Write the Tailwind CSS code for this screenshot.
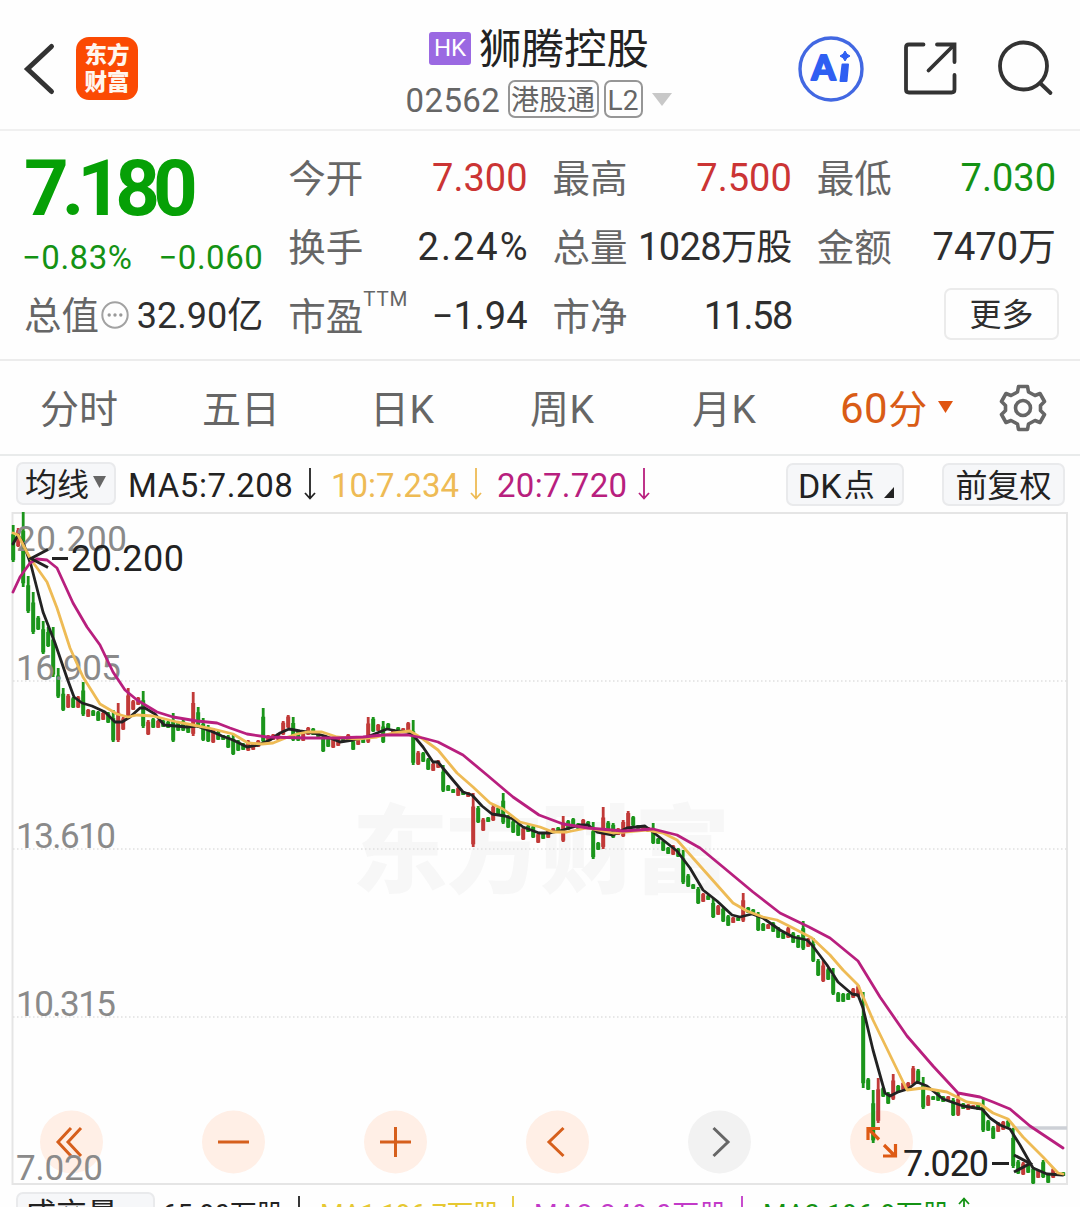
<!DOCTYPE html>
<html lang="zh-CN">
<head>
<meta charset="utf-8">
<title>狮腾控股 02562</title>
<script src="https://cdn.jsdelivr.net/npm/@tailwindcss/browser@4"></script>
</head>
<body class="bg-white">
<div class="w-[1080px] h-[1207px] overflow-hidden flex flex-col bg-[#fefefe] font-[Roboto,'Noto_Sans_CJK_SC',sans-serif] text-[#2e2e2e] whitespace-nowrap">

  <!-- Title bar -->
  <header class="h-[131px] shrink-0 border-b-2 border-[#f0f0f0] flex items-start">
    <svg class="w-[52px] h-[60px] ml-2 mt-[39px] shrink-0" viewBox="8 39 52 60" fill="none" stroke="#333" stroke-width="5" stroke-linecap="round"><path d="M51.500 46.500L27.500 69L51.500 91.500" stroke-linejoin="miter"/></svg>
    <div class="w-[62px] h-[63px] ml-4 mt-[37px] shrink-0 rounded-[13px] bg-[#fb4a03] text-[#fff6ee] font-black text-[22.500px] leading-[27px] flex flex-col items-center justify-center"><span>东方</span><span>财富</span></div>
    <div class="w-[400px] ml-[202px] mt-[18px] shrink-0 flex flex-col items-center">
      <div class="h-[60px] flex items-center -ml-[2px]">
        <span class="w-[42px] h-[33px] mr-2 rounded-[3px] bg-[#9b69e2] text-white text-[24px] leading-[33px] text-center">HK</span>
        <span class="text-[42.500px] leading-[60px] pt-[3px] text-[#222]">狮腾控股</span>
      </div>
      <div class="h-[42px] flex items-center text-[#666] -ml-[3px]">
        <span class="text-[33px] leading-[42px] pt-[3px] tracking-[0.400px] w-[102px]">02562</span>
        <span class="w-[91px] h-[38px] border-2 border-[#969696] rounded-[7px] text-[28px] leading-[38px] text-center">港股通</span>
        <span class="w-[39px] h-[38px] ml-[5px] border-2 border-[#969696] rounded-[7px] text-[28px] leading-[38px] text-center">L2</span>
        <svg class="w-5 h-[13px] ml-[9px]" viewBox="0 0 20 13"><path d="M0 0H20L10 13Z" fill="#c8c8c8"/></svg>
      </div>
    </div>
    <svg class="w-[280px] h-[80px] ml-[52px] mt-[29px] shrink-0" viewBox="792 29 280 80" fill="none" stroke="#333" stroke-width="3.800">
      <circle cx="831" cy="69" r="31" stroke="#4268e2" stroke-width="3.400"/>
      <g fill="#2f5ff2" stroke="#2f5ff2" stroke-linejoin="round">
        <text x="811.500" y="80" font-family="Lato" font-weight="900" font-size="35" textLength="24" lengthAdjust="spacingAndGlyphs" stroke-width="2">A</text>
        <path d="M842.500 64.500H848L846.500 81H840.500Z" stroke-width="2"/>
        <path d="M845 51Q846.300 54.700 850 56Q846.300 57.300 845 61Q843.700 57.300 840 56Q843.700 54.700 845 51Z" stroke-width="1"/>
      </g>
      <path d="M923.500 44.500H909Q906 44.500 906 47.500V89.500Q906 92.500 909 92.500H951.500Q954.500 92.500 954.500 89.500V75M937 44.500H954.500V62M928.500 70.500L954 45" stroke-linecap="round"/>
      <circle cx="1023.500" cy="66" r="23.500"/><path d="M1040 83L1050.500 93" stroke-linecap="round"/>
    </svg>
  </header>

  <!-- Quote figures -->
  <section class="h-[230px] shrink-0 border-b-2 border-[#ececec] px-6 pt-[13px] grid grid-cols-4 gap-x-[25px] text-[38px] leading-[69px]">
    <div>
      <div class="h-[90px] text-[78px] leading-[90px] font-bold tracking-[-7px] text-[#06a006]">7.180</div>
      <div class="h-[48px] flex justify-between text-[33px] leading-[48px] text-[#149214]"><span class="tracking-[0.500px] -ml-0.5">−0.83%</span><span class="tracking-[0.500px]">−0.060</span></div>
      <div class="h-[69px] flex items-center justify-between">
        <span class="flex items-center text-[#666] text-[37.500px]">总值<svg class="w-[28px] h-[28px] ml-0.5 -mt-1" viewBox="0 0 28 28" fill="#999"><circle cx="14" cy="14" r="12.700" fill="none" stroke="#a2a2a2" stroke-width="2"/><circle cx="8.200" cy="14" r="1.700"/><circle cx="14" cy="14" r="1.700"/><circle cx="19.800" cy="14" r="1.700"/></svg></span>
        <span class="text-[36px]">32.90亿</span>
      </div>
    </div>
    <div>
      <div class="h-[69px] flex justify-between"><span class="text-[#666] text-[37.500px] pt-px">今开</span><span class="text-[#cb3434]">7.300</span></div>
      <div class="h-[69px] flex justify-between"><span class="text-[#666] text-[37.500px] pt-px">换手</span><span class="tracking-[2px] -mr-[2px]">2.24%</span></div>
      <div class="h-[69px] flex justify-between"><span class="text-[#666] text-[37.500px] flex pt-px">市盈<span class="text-[20.500px] leading-[32px] tracking-[0.800px]">TTM</span></span><span>−1.94</span></div>
    </div>
    <div>
      <div class="h-[69px] flex justify-between"><span class="text-[#666] text-[37.500px] pt-px">最高</span><span class="text-[#cb3434]">7.500</span></div>
      <div class="h-[69px] flex justify-between"><span class="text-[#666] text-[37.500px] pt-px">总量</span><span class="text-[38px] tracking-[-0.600px]">1028<span class="text-[36px]">万股</span></span></div>
      <div class="h-[69px] flex justify-between"><span class="text-[#666] text-[37.500px] pt-px">市净</span><span class="tracking-[-1.500px]">11.58</span></div>
    </div>
    <div>
      <div class="h-[69px] flex justify-between"><span class="text-[#666] text-[37.500px] pt-px">最低</span><span class="text-[#149214]">7.030</span></div>
      <div class="h-[69px] flex justify-between"><span class="text-[#666] text-[37.500px] pt-px">金额</span><span>7470万</span></div>
      <div class="h-[69px] flex items-center justify-end"><span class="w-[115px] h-[52px] -mr-[3px] -mt-1.5 border-2 border-[#ebebeb] rounded-[7px] text-[32px] leading-[51px] text-center">更多</span></div>
    </div>
  </section>

  <!-- Period tabs -->
  <nav class="h-[95px] shrink-0 border-b-2 border-[#e9ebeb] flex items-center text-[39px] leading-[94px] text-[#666]">
    <span class="w-[162px] ml-10 pt-1">分时</span>
    <span class="w-[168px] pt-1">五日</span>
    <span class="w-[160px] pt-1 tracking-[0.500px]">日K</span>
    <span class="w-[162px] pt-1 tracking-[0.500px]">周K</span>
    <span class="w-[148px] pt-1 tracking-[0.500px]">月K</span>
    <span class="w-[98px] pt-1 text-[#d95c16]"><span class="text-[42px] tracking-[0.500px]">60</span>分</span>
    <svg class="w-[15px] h-3 -mt-0.5" viewBox="0 0 15 12"><path d="M0 0H15L7.500 12Z" fill="#e05410"/></svg>
    <svg class="w-[48px] h-[50px] ml-[46px]" viewBox="-24 -25 48 50" fill="none" stroke="#666" stroke-width="3.600" stroke-linejoin="round"><path d="M-4.500-21.500H4.500L5.500-16L12-12.500L17-14.500L21.500-6.500L17.500-2.500V2.500L21.500 6.500L17 14.500L12 12.500L5.500 16L4.500 21.500H-4.500L-5.500 16L-12 12.500L-17 14.500L-21.500 6.500L-17.500 2.500V-2.500L-21.500-6.500L-17-14.500L-12-12.500L-5.500-16Z"/><circle r="7.500"/></svg>
  </nav>

  <!-- Moving average readout -->
  <div class="h-[51px] shrink-0 flex items-center text-[33px] leading-[50px]">
    <span class="w-[100px] h-[43px] ml-4 mt-1 border-2 border-[#e9eaec] rounded-[7px] bg-[#f6f7f9] text-[32px] leading-[40px] pt-[3px] pl-[7px] flex items-center text-[#222]">均线<svg class="w-[13px] h-3 ml-1 -mt-1.5" viewBox="0 0 13 12"><path d="M0 0H13L6.500 12Z" fill="#666"/></svg></span>
    <span class="w-[176px] ml-3 mt-2 tracking-[0.600px] text-[#222]">MA5:7.208</span>
    <svg class="w-3 h-8 mt-1" viewBox="0 0 12 32" fill="none" stroke="#222" stroke-width="1.800"><path d="M6 0V30M1 25L6 30.500L11 25"/></svg>
    <span class="w-[138px] ml-[15px] mt-2 text-[#eebb55]">10:7.234</span>
    <svg class="w-3 h-8 mt-1 ml-px" viewBox="0 0 12 32" fill="none" stroke="#eebb55" stroke-width="1.800"><path d="M6 0V30M1 25L6 30.500L11 25"/></svg>
    <span class="w-[141px] ml-[15px] mt-2 tracking-[0.300px] text-[#b81f7e]">20:7.720</span>
    <svg class="w-3 h-8 mt-1" viewBox="0 0 12 32" fill="none" stroke="#b81f7e" stroke-width="1.800"><path d="M6 0V30M1 25L6 30.500L11 25"/></svg>
    <span class="w-[118px] h-[43px] ml-[136px] mt-1.5 border-2 border-[#e9eaec] rounded-[7px] bg-[#f6f7f9] text-[34px] leading-[40px] pt-[2px] pl-[10px] flex items-center text-[#222]">DK<span class="text-[31px] ml-0.5">点</span><svg class="w-[10px] h-[11px] ml-[9px] mt-[14px]" viewBox="0 0 10 11"><path d="M10 0V11H0Z" fill="#222"/></svg></span>
    <span class="w-[123px] h-[43px] ml-[38px] mt-1.5 border-2 border-[#e9eaec] rounded-[7px] bg-[#f6f7f9] text-[32px] leading-[42px] text-center text-[#222]">前复权</span>
  </div>

  <!-- 60-minute candlestick chart -->
  <svg class="w-[1080px] h-[680px] shrink-0 block" viewBox="0 507 1080 680" font-family="Roboto, sans-serif">
    <text x="352" y="885" font-family="Noto Sans CJK SC, sans-serif" font-weight="900" font-size="96" fill="#f7f7f7" textLength="378">东方财富</text>
    <g fill="none" stroke="#e5e5e5" stroke-width="2">
      <path d="M12.500 513H1067V1184H12.500Z"/>
      <path d="M13 681H1067M13 849H1067M13 1017H1067" stroke="#e0e0e0" stroke-width="1.500" stroke-dasharray="1.500 2.500"/>
    </g>
    <g fill="#ffefe6">
      <circle cx="71.500" cy="1142" r="31.500"/><circle cx="233.500" cy="1142" r="31.500"/><circle cx="395.500" cy="1142" r="31.500"/><circle cx="557.500" cy="1142" r="31.500"/><circle cx="719.500" cy="1142" r="31.500" fill="#f2f2f2"/><circle cx="881.500" cy="1142" r="31.500"/>
    </g>
    <g fill="none" stroke="#d65f1c" stroke-width="3">
      <path d="M71 1128L58 1142L71 1156M81 1128L68 1142L81 1156M218 1142H249M380 1142H411M395.500 1127V1157M563.500 1128L549 1142L563.500 1156"/>
      <path d="M713.500 1128L728 1142L713.500 1156" stroke="#666"/>
    </g>
    <path d="M1012 1128H1067" stroke="#cdd0d6" stroke-width="3.500"/>
    <g id="candles"></g>
    <g fill="none" stroke="#de5a14" stroke-width="3.200">
      <path d="M868 1140V1128.500H880M868.500 1129L879 1139.500M884 1145L895 1156M895.500 1144V1156H883"/>
    </g>
    <g font-size="35" fill="#8a8a8a">
      <text x="16" y="551" textLength="111">20.200</text>
      <text x="16" y="680" textLength="105">16.905</text>
      <text x="16" y="848" textLength="100">13.610</text>
      <text x="16" y="1016" textLength="100">10.315</text>
      <text x="16" y="1180" textLength="87">7.020</text>
    </g>
    <g id="averages" fill="none" stroke-width="2.800" stroke-linejoin="round" stroke-linecap="round"></g>
    <g fill="#222" font-size="36"><text x="71" y="570.500" textLength="113">20.200</text><text x="903" y="1175.500" textLength="86">7.020</text></g>
    <path d="M52 558.500H68M48 549.500L31 558.500L48 567.500M992 1163.500H1009M1014 1155L1030 1163.500L1014 1172" fill="none" stroke="#222" stroke-width="3"/>
  </svg>

  <!-- Volume readout -->
  <div class="h-[60px] shrink-0 flex items-start pt-[5px] text-[27px] leading-[42px]">
    <span class="w-[139px] h-[43px] ml-4 shrink-0 border-2 border-[#e9eaec] rounded-[7px] bg-[#f6f7f9] text-[31px] leading-[42px] pl-[7px] text-[#222]">成交量</span>
    <span class="w-[131px] ml-[7px] mt-0.5 text-[#222]">65.90万股</span>
    <svg class="w-3 h-8 mt-1 shrink-0" viewBox="0 0 12 32" fill="none" stroke="#222" stroke-width="1.800"><path d="M6 0V30M1 25L6 30.500L11 25"/></svg>
    <span class="w-[187px] ml-[15px] mt-0.5 tracking-[-0.500px] text-[#e6c832]">MA1:196.7万股</span>
    <svg class="w-3 h-8 mt-1 shrink-0" viewBox="0 0 12 32" fill="none" stroke="#e6c832" stroke-width="1.800"><path d="M6 0V30M1 25L6 30.500L11 25"/></svg>
    <span class="w-[202px] ml-[15px] mt-0.5 tracking-[0.800px] text-[#c23ac8]">MA2:249.0万股</span>
    <svg class="w-3 h-8 mt-1 shrink-0" viewBox="0 0 12 32" fill="none" stroke="#c23ac8" stroke-width="1.800"><path d="M6 0V30M1 25L6 30.500L11 25"/></svg>
    <span class="w-[195px] ml-[15px] mt-0.5 tracking-[0.200px] text-[#149214]">MA3:196.9万股</span>
    <svg class="w-3 h-8 mt-[5px] shrink-0" viewBox="0 0 12 32" fill="none" stroke="#149214" stroke-width="1.800"><path d="M6 31V1M1 7L6 1.500L11 7"/></svg>
  </div>
</div>

<script>
// One entry per hour: direction (g = down, r = up), high and low in chart units.
const bars = `g525-562 r528-547 g512-587 g576-613 g592-634 g616-630 g621-654 g627-647 g627-677 g668-698
g688-711 r694-708 g697-708 r696-708 g682-716 r709-717 g710-716 g711-721 r712-720 g712-723
g710-742 r703-742 r717-730 r688-718 r700-710 r697-705 g691-728 r720-735 g718-728 r720-728
g720-727 g721-728 g713-742 g721-731 g720-731 g723-733 r692-736 g707-728 g718-741 g725-742
r728-743 g731-740 g735-740 g735-748 g734-755 g740-751 g743-750 r740-751 r742-750 r740-747
g708-743 r735-742 r734-740 r733-740 r721-735 r715-728 g717-741 g730-741 r733-741 r727-735
g728-735 g732-737 g735-752 g738-747 r737-748 r738-746 g738-742 r734-741 g740-750 r737-745
g738-743 r717-743 g717-732 r724-731 g721-743 g723-730 r729-733 g727-732 r728-732 r722-732
g720-765 r751-765 g752-762 g758-770 r763-771 r760-768 g765-792 g785-791 g789-793 r787-796
g791-795 r792-797 r793-847 g806-823 r818-831 g817-822 r805-821 g807-816 g793-824 g815-828
g820-833 g823-836 r827-840 g825-832 g825-838 r833-843 g832-839 r830-838 r828-833 g827-833
r816-842 g820-830 g818-828 g823-829 r819-827 g821-828 g822-859 g842-850 r807-849 g821-835
g823-838 r828-835 r820-837 r811-828 g816-826 g825-829 r825-829 r827-832 g823-844 g838-844
g840-851 g847-854 r845-855 g848-857 g850-884 g874-887 g884-889 g887-904 r893-902 g895-900
g898-918 r905-915 g907-922 g915-926 r917-923 g917-921 r893-922 g907-913 g909-915 g912-931
g923-931 r924-929 g922-932 g927-938 g932-939 r927-938 g932-943 g935-948 g921-950 r938-947
g938-962 g959-976 r960-982 g968-980 g968-995 g992-1002 g993-1002 g993-1000 r988-998 r985-997
g992-1088 g1078-1090 g1090-1143 r1078-1123 g1087-1097 g1092-1104 r1074-1100 g1085-1093 r1082-1090 r1082-1090
r1066-1085 g1069-1082 g1077-1109 r1095-1106 g1096-1100 g1092-1101 g1096-1102 r1096-1101 g1098-1116 r1093-1116
g1103-1109 r1104-1110 r1105-1109 g1104-1110 g1099-1132 g1120-1131 g1126-1139 r1122-1132 r1121-1130 g1120-1127
g1128-1168 g1160-1174 r1162-1175 g1163-1173 g1167-1184 r1170-1178 g1160-1178 g1173-1183 r1168-1178 r1172-1176
g1172-1176`.split(/\s+/);
const ns = "http://www.w3.org/2000/svg";
const candles = document.getElementById("candles");
const rect = (x, y, w, h, fill) => {
  const r = document.createElementNS(ns, "rect");
  Object.entries({x, y, width: w, height: h, fill}).forEach(([k, v]) => r.setAttribute(k, v));
  candles.appendChild(r);
};
bars.forEach((b, i) => {
  const [hi, lo] = b.slice(1).split("-").map(Number);
  const x = 13.200 + i * 5, c = b[0] === "g" ? "#1b951b" : "#c13a38", n = lo - hi;
  const inset = n < 20 ? 0.120 : 0.250;
  rect(x - 1.400, hi, 2.800, n, c);
  rect(x - 2, hi + n * inset, 4, n * (0.950 - inset), c);
});

const lines = [
  ["#222222", "13,544 18,535 24,545 31,565 43,612 55,643 67,678 74,697 82,703 92,706 105,712 115,722 122,722 130,717 140,708 145,708 155,714 164,725 187,727 197,726 213,732 222,736 233,740 247,747 258,745 270,740 280,733 289,729 300,731 313,733 325,736 340,742 353,740 367,737 377,733 387,729 397,731 407,732 413,735 423,747 433,762 438,762 447,773 463,792 472,795 482,806 492,814 505,816 513,819 523,827 539,833 550,833 563,830 580,825 588,825 597,832 613,835 627,828 645,826 653,832 663,840 677,851 690,868 703,890 717,901 732,915 740,917 752,914 763,918 780,930 793,937 807,940 812,945 827,965 838,982 852,994 858,995 863,1008 873,1050 885,1093 890,1096 898,1092 908,1089 917,1082 927,1086 943,1099 963,1106 982,1109 990,1118 1000,1125 1010,1129 1020,1145 1033,1168 1047,1174 1063,1175"],
  ["#eebb55", "13,533 18,535 30,558 47,582 57,608 70,648 83,677 100,704 117,714 128,717 137,715 153,716 177,722 193,725 213,729 233,734 248,743 262,744 273,743 288,737 297,734 307,732 322,732 337,737 357,739 377,737 393,733 410,731 423,739 438,750 457,773 473,787 490,803 503,809 520,822 540,827 553,832 567,832 587,828 613,833 647,830 663,833 677,840 693,858 717,885 733,903 747,911 763,917 777,920 793,928 812,938 830,955 843,970 858,985 873,1020 890,1055 907,1090 923,1088 947,1092 967,1102 980,1104 993,1113 1008,1119 1023,1137 1043,1157 1058,1173 1063,1174"],
  ["#b81f7e", "13,592 20,577 30,563 37,559 47,560 57,568 73,603 87,627 100,645 113,672 125,690 137,700 157,712 173,717 197,721 217,723 230,728 247,734 267,737 307,738 337,738 363,737 383,735 408,735 423,738 438,742 463,755 487,775 513,797 539,815 547,818 563,824 588,828 623,831 653,829 677,835 700,848 723,867 753,892 780,913 809,927 830,938 858,961 880,997 907,1036 933,1066 958,1093 980,1097 993,1102 1010,1109 1030,1126 1063,1148"]
];
for (const [color, pts] of lines) {
  const p = document.createElementNS(ns, "polyline");
  p.setAttribute("points", pts);
  p.setAttribute("stroke", color);
  document.getElementById("averages").appendChild(p);
}
</script>
</body>
</html>
